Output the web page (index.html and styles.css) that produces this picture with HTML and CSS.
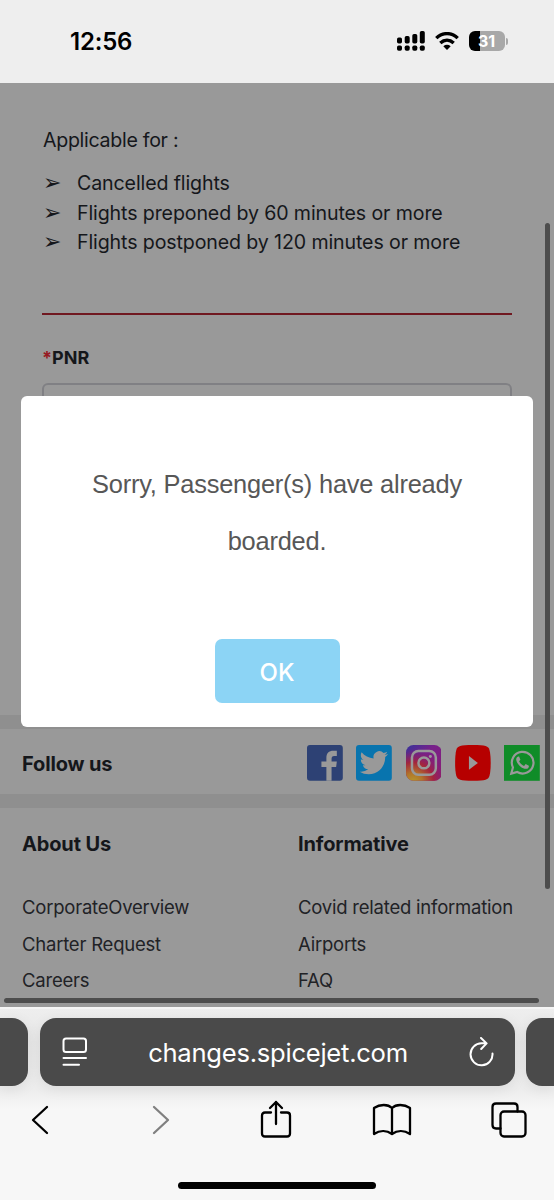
FILE: index.html
```
<!DOCTYPE html>
<html lang="en">
<head>
    <meta charset="UTF-8">
    <title>SpiceJet Changes</title>
    <meta name="viewport" content="width=device-width, initial-scale=1.0">
    <link rel="stylesheet" href="styles.css">
</head>
<body>
<header class="status-bar">
    <div class="time">12:56</div>
    <div class="status-icons">
        <svg width="28" height="20" viewBox="0 0 28 20">
            <rect x="0" y="6.5" width="5" height="6" rx="1.7"/>
            <rect x="7.7" y="5" width="5" height="7.5" rx="1.7"/>
            <rect x="15.3" y="3" width="5" height="9.5" rx="1.7"/>
            <rect x="22.8" y="0" width="5" height="12.5" rx="1.7"/>
            <rect x="0" y="14.5" width="5" height="5.3" rx="1.7"/>
            <rect x="7.7" y="14.5" width="5" height="5.3" rx="1.7"/>
            <rect x="15.3" y="14.5" width="5" height="5.3" rx="1.7"/>
            <rect x="22.8" y="14.5" width="5" height="5.3" rx="1.7"/>
        </svg>
        <svg class="wifi" width="24" height="18" viewBox="0 0 24 18">
            <path d="M1.3 6.1C7.5.1 16.5.1 22.7 6.1M5.300 10.900C9.300 7.300 14.700 7.300 18.700 10.900" fill="none" stroke="#000" stroke-width="3.400"/>
            <path d="M8.300 14.200Q12 11.300 15.700 14.200L12 18Z"/>
        </svg>
        <div class="battery"><span>31</span></div>
        <i class="battery-cap"></i>
    </div>
</header>

<main class="page">
    <section class="info">
        <p>Applicable for :</p>
        <ul>
            <li>Cancelled flights</li>
            <li>Flights preponed by 60 minutes or more</li>
            <li>Flights postponed by 120 minutes or more</li>
        </ul>
        <hr>
        <label for="pnr"><span>*</span>PNR</label>
        <input type="text" id="pnr" name="pnr">
    </section>

    <section class="follow">
        <h2>Follow us</h2>
        <div class="social">
            <svg viewBox="0 0 36 36">
                <rect width="36" height="36" rx="3" fill="#2d4174"/>
                <path d="M19.5 36V22H14.5V16.5H19.5V13C19.5 8 22 5.7 26.5 5.7H30V11H27.5C25.3 11 24.7 12 24.7 14V16.5H30L29.3 22H24.7V36Z" fill="#999"/>
            </svg>
            <svg viewBox="0 0 36 36">
                <rect width="36" height="36" rx="3" fill="#0874ae"/>
                <path transform="translate(3.7 3.6) scale(1.19)" d="M23.95 4.57a10 10 0 0 1-2.82.77 4.96 4.96 0 0 0 2.16-2.72c-.95.55-2 .95-3.13 1.18a4.92 4.92 0 0 0-8.38 4.48C7.69 8.09 4.07 6.13 1.64 3.16a4.82 4.82 0 0 0-.67 2.48c0 1.71.87 3.21 2.19 4.1a4.9 4.9 0 0 1-2.23-.62v.06a4.92 4.92 0 0 0 3.95 4.83 5 5 0 0 1-2.21.08 4.94 4.94 0 0 0 4.6 3.42A9.87 9.87 0 0 1 0 19.54a13.99 13.99 0 0 0 7.55 2.21c9.05 0 14-7.5 14-13.98 0-.21 0-.42-.02-.63a9.94 9.94 0 0 0 2.42-2.57Z" fill="#999"/>
            </svg>
            <svg viewBox="0 0 36 36">
                <defs>
                    <linearGradient id="ig-base" x1="0" y1="0" x2="1" y2="1">
                        <stop offset="0" stop-color="#35329a"/>
                        <stop offset=".4" stop-color="#78218a"/>
                        <stop offset="1" stop-color="#8b1c73"/>
                    </linearGradient>
                    <radialGradient id="ig-warm" cx=".2" cy="1.05" r=".95">
                        <stop offset="0" stop-color="#b59a2c"/>
                        <stop offset=".28" stop-color="#b1752a"/>
                        <stop offset=".6" stop-color="#a82535" stop-opacity=".9"/>
                        <stop offset="1" stop-color="#841d78" stop-opacity="0"/>
                    </radialGradient>
                </defs>
                <rect width="36" height="36" rx="7.5" fill="url(#ig-base)"/>
                <rect width="36" height="36" rx="7.5" fill="url(#ig-warm)"/>
                <g fill="none" stroke="#999" stroke-width="2.5">
                    <rect x="6" y="6" width="24" height="24" rx="6.5"/>
                    <circle cx="18" cy="18" r="5.5"/>
                </g>
                <circle cx="24.5" cy="11.5" r="1.5" fill="#999"/>
            </svg>
            <svg viewBox="0 0 36 36">
                <path d="M18 0C31 0 33.5 1 34.7 5C36.3 11 36.3 25 34.7 31C33.5 35 31 36 18 36S2.5 35 1.3 31C-.3 25-.3 11 1.3 5C2.5 1 5 0 18 0Z" fill="#b60000"/>
                <path d="M14 11L23 18L14 25Z" fill="#999"/>
            </svg>
            <svg viewBox="0 0 36 36">
                <rect width="36" height="36" fill="#0f8c28"/>
                <path d="M7.3 28.8L9 22.6A10.9 10.9 0 1 1 13.3 27.2Z" fill="none" stroke="#999" stroke-width="2.2"/>
                <path d="M14.5 11.5C13.5 11.5 12 13 12.3 15C13 19.5 18 24 22 24C24 24 25.3 22.5 25 20.8L21.8 19.2L20.2 21.1C17.9 20.2 16.2 18.5 15.2 16.3L16.5 14.8L15.2 11.5Z" fill="#999"/>
            </svg>
        </div>
    </section>

    <section class="links">
        <div>
            <h2>About Us</h2>
            <a>CorporateOverview</a>
            <a>Charter Request</a>
            <a>Careers</a>
        </div>
        <div>
            <h2>Informative</h2>
            <a>Covid related information</a>
            <a>Airports</a>
            <a>FAQ</a>
        </div>
    </section>

    <i class="scroll-y"></i>
    <i class="scroll-x"></i>

    <!-- Alert -->
    <div class="modal">
        <p>Sorry, Passenger(s) have already boarded.</p>
        <button type="button">OK</button>
    </div>
</main>

<footer class="browser">
    <div class="tabs">
        <div class="tab-edge left"></div>
        <div class="address">
            <svg width="26" height="30" viewBox="0 0 26 30" fill="none" stroke="#fff" stroke-width="2" stroke-linecap="round">
                <rect x="1.5" y="1.5" width="22.5" height="13.5" rx="2.5"/>
                <path d="M1.5 21H24M1.5 27.7H17"/>
            </svg>
            <span>changes.spicejet.com</span>
            <svg width="26" height="30" viewBox="0 0 26 30" fill="none" stroke="#fff" stroke-width="2" stroke-linecap="round" stroke-linejoin="round">
                <path d="M18 6.300H13.500A11 11 0 1 0 24.500 16.500M13 1L18.600 6.400L13.200 12"/>
            </svg>
        </div>
        <div class="tab-edge right"></div>
    </div>
    <nav class="toolbar">
        <svg class="back" width="18" height="30" viewBox="0 0 18 30"><path d="M16 2L2 15L16 28"/></svg>
        <svg class="forward" width="18" height="30" viewBox="0 0 18 30"><path d="M2 2L16 15L2 28"/></svg>
        <svg class="share" width="32" height="38" viewBox="0 0 32 38"><path d="M11 12.5H5Q2 12.5 2 15.5V33.5Q2 36.5 5 36.5H27Q30 36.5 30 33.5V15.5Q30 12.5 27 12.5H21M16 24V2M10 8L16 2L22 8"/></svg>
        <svg class="bookmarks" width="40" height="34" viewBox="0 0 40 34"><path d="M20 5V31M20 5C16 1 8 1 2 5V31C8 27 15 27.5 20 31C25 27.5 32 27 38 31V5C32 1 24 1 20 5Z"/></svg>
        <svg width="36" height="36" viewBox="0 0 36 36"><path d="M9.5 26.5H5Q1.5 26.5 1.5 23V5Q1.5 1.5 5 1.5H23Q26.500 1.500 26.500 5V9.500"/><rect x="9.500" y="9.500" width="25" height="25" rx="3.500"/></svg>
    </nav>
    <div class="home-bar"></div>
</footer>
</body>
</html>
```

FILE: styles.css
```
* { box-sizing: border-box; }
body { margin: 0; width: 554px; height: 1200px; overflow: hidden; display: flex; flex-direction: column; font-family: Inter, "Liberation Sans", sans-serif; color: #15171b; }
h2, p, ul { margin: 0; padding: 0; }
svg { display: block; flex: none; }

/* Status bar */
.status-bar { height: 83px; background: #eee; display: flex; justify-content: space-between; align-items: flex-start; padding: 27px 46px 0 70px; color: #000; }
.time { font-size: 24px; line-height: 29px; font-weight: 600; letter-spacing: -0.2px; }
.status-icons { display: flex; align-items: center; padding-top: 4px; }
.wifi { margin: 0 10px; }
.battery { width: 36px; height: 20px; border-radius: 6px; background: linear-gradient(90deg, #000 11px, #a8a8a8 11px); color: #fff; font-size: 16px; line-height: 20px; font-weight: 700; text-align: center; padding-right: 1px; }
.battery-cap { width: 2px; height: 7px; margin-left: 1px; background: #a8a8a8; border-radius: 0 2px 2px 0; }

/* Page, dimmed behind the alert */
.page { height: 924px; position: relative; background: #999; overflow: hidden; }
.info { height: 632px; padding: 42px 42px 0; font-size: 19.6px; }
.info p { line-height: 30px; padding-left: 1px; letter-spacing: -0.3px; }
.info ul { list-style: none; padding-top: 14px; }
.info li { display: flex; line-height: 29.6px; letter-spacing: -0.12px; }
.info li::before { content: "\27A2"; width: 34px; margin: -1px 0 1px 1px; font-family: "DejaVu Sans", sans-serif; font-size: 22px; }
.info hr { margin: 55px 0 0; border: 0; height: 2px; background: #701820; }
.info label { display: block; margin: 28px 0 10px; font-size: 18px; line-height: 30px; font-weight: 700; }
.info label span { color: #971a22; }
.info input { display: block; width: 100%; height: 64px; border: 2px solid #808084; border-radius: 6px; background: #999; }

.follow { height: 93px; border: solid #8f8f8f; border-width: 14px 0; display: flex; align-items: center; justify-content: space-between; padding: 3px 14px 0 22px; }
h2 { font-size: 20px; line-height: 28px; font-weight: 700; letter-spacing: -0.15px; }
.follow h2 { padding-top: 2px; }
.social { display: flex; gap: 13.5px; }
.social svg { width: 35.8px; height: 35.8px; }

.links { display: grid; grid-template-columns: 276px 1fr; padding: 22px 0 0 22px; }
.links h2 { margin-bottom: 31px; }
.links a { display: block; font-size: 18.5px; line-height: 36.6px; letter-spacing: -0.22px; color: #212226; }

.scroll-y { position: absolute; left: 545px; top: 140px; width: 5px; height: 666px; border-radius: 3px; background: #4d4d4d; }
.scroll-x { position: absolute; left: 4px; top: 915px; width: 535px; height: 5px; border-radius: 3px; background: #4d4d4d; }

.modal { position: absolute; left: 21px; top: 313px; width: 512px; height: 331px; background: #fff; border-radius: 6px; padding: 60px 60px 0; text-align: center; font-family: "Liberation Sans", Arial, sans-serif; }
.modal p { font-size: 25.4px; line-height: 56.5px; letter-spacing: -0.2px; color: #575757; }
.modal button { margin-top: 70px; width: 125px; height: 64px; border: 0; border-radius: 7px; background: #8cd4f5; color: #fff; font: 500 24px Inter, sans-serif; padding-top: 3px; }

/* Browser chrome */
.browser { height: 193px; background: linear-gradient(#eee, #e8e8e8 30px, #ededed 80px, #f7f7f7 100px); border-top: 2px solid #f5f5f5; padding-top: 9px; }
.tabs { display: flex; justify-content: space-between; }
.address, .tab-edge { height: 68px; background: #4a4a4a; box-shadow: 0 3px 14px rgba(0,0,0,0.08); }
.address { width: 475px; border-radius: 16px; display: flex; align-items: center; justify-content: space-between; padding: 0 20px 0 22px; color: #fff; font-size: 25.6px; letter-spacing: -0.26px; }
.tab-edge { width: 28px; }
.left { border-radius: 0 16px 16px 0; }
.right { border-radius: 16px 0 0 16px; }
.toolbar { height: 68px; display: flex; align-items: center; padding: 0 27px 0 31px; }
.toolbar svg { fill: none; stroke: #000; stroke-width: 2.3; stroke-linecap: round; stroke-linejoin: round; }
.toolbar .back { margin-right: 103px; }
.toolbar .forward { margin-right: 90px; stroke: #808080; }
.toolbar .share { margin: -2px 80px 0 0; }
.toolbar .bookmarks { margin-right: 79px; }
.home-bar { width: 198px; height: 7px; margin: 28px auto 0; border-radius: 4px; background: #000; }
```
